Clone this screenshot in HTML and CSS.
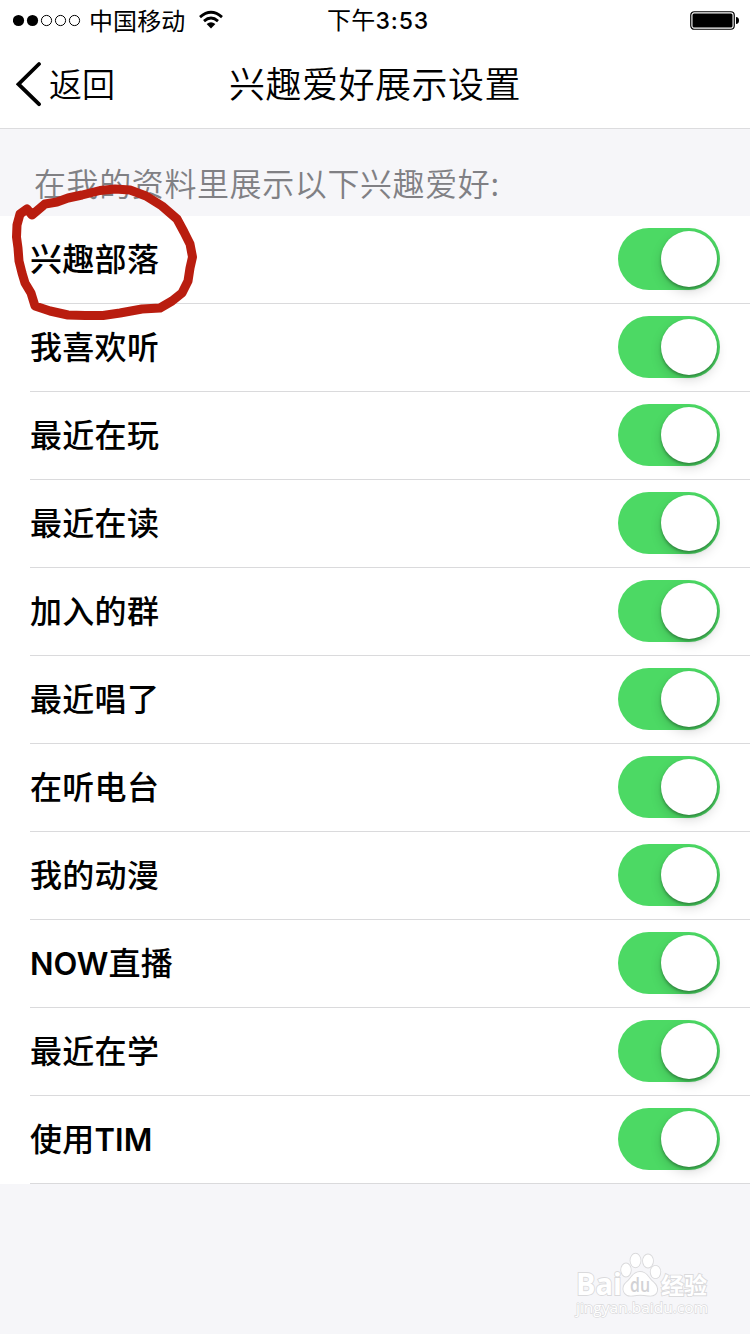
FILE: index.html
```html
<!DOCTYPE html>
<html lang="zh-CN">
<head>
<meta charset="utf-8">
<title>兴趣爱好展示设置</title>
<link rel="stylesheet" href="styles.css">
</head>
<body>
<div class="screen">
  <header class="top">
    <div class="status">
      <div class="status-left">
        <svg class="signal" width="68" height="14" viewBox="0 0 68 14">
          <circle cx="5.500" cy="6.500" r="5.6"/><circle cx="19.500" cy="6.500" r="5.6"/>
          <g fill="none" stroke="#000"><circle cx="33.500" cy="6.500" r="5.1"/><circle cx="47.500" cy="6.500" r="5.1"/><circle cx="61.500" cy="6.500" r="5.1"/></g>
        </svg>
        <span class="carrier">中国移动</span>
        <svg class="wifi" width="26" height="20" viewBox="0 0 26 20">
          <g fill="none" stroke="#000" stroke-width="2.8"><path d="M2 7.1Q13-2.5 24 7.1"/><path d="M6 11.1Q13 5 20 11.1"/></g>
          <path d="M8.6 14Q13 10.6 17.4 14L13 18.6Z"/>
        </svg>
      </div>
      <span class="time">下午<b>3:53</b></span>
      <svg class="battery" width="50" height="19" viewBox="0 0 50 19">
        <rect x=".75" y=".75" width="43.5" height="17.5" rx="3.5" fill="none" stroke="#000" stroke-width="1.2"/>
        <rect x="2.5" y="2.5" width="40" height="14" rx="1.5"/>
        <path d="M46 6Q49 6.4 49 9.5T46 13Z"/>
      </svg>
    </div>
    <nav class="nav">
      <a class="back"><svg width="26" height="46" viewBox="0 0 26 46"><path d="M23 3 2.5 23.2 23 43.2" fill="none" stroke="#000" stroke-width="3.8" stroke-linecap="round" stroke-linejoin="miter"/></svg><span>返回</span></a>
      <h1 class="title">兴趣爱好展示设置</h1>
    </nav>
  </header>
  <p class="caption">在我的资料里展示以下兴趣爱好:</p>
  <main class="list">
    <div class="row"><span>兴趣部落</span><i class="switch"></i></div>
    <div class="row"><span>我喜欢听</span><i class="switch"></i></div>
    <div class="row"><span>最近在玩</span><i class="switch"></i></div>
    <div class="row"><span>最近在读</span><i class="switch"></i></div>
    <div class="row"><span>加入的群</span><i class="switch"></i></div>
    <div class="row"><span>最近唱了</span><i class="switch"></i></div>
    <div class="row"><span>在听电台</span><i class="switch"></i></div>
    <div class="row"><span>我的动漫</span><i class="switch"></i></div>
    <div class="row"><span><b class="latin">NOW</b>直播</span><i class="switch"></i></div>
    <div class="row"><span>最近在学</span><i class="switch"></i></div>
    <div class="row"><span>使用<b class="latin">TIM</b></span><i class="switch"></i></div>
  </main>
  <svg class="marker" width="200" height="150" viewBox="0 180 200 150">
    <path d="M32 215L27 209L20 214L17 225L16.500 237L18 248L19 261L22 273L25 283L31 293L35 306L50 311L68 315L85 315.500L103 315.500L120 313L142 309L160 308L172 301L182 293L188 281L190 268L192.500 257L190 244L184 232L177 219L162 206L146 196L130 190L115 189L100 190.500L82 195L68 198L57 202L45 204Z" fill="none" stroke="#b91d0f" stroke-width="9" stroke-linecap="round" stroke-linejoin="round"/>
  </svg>
  <svg class="watermark" width="150" height="76" viewBox="570 1248 150 76">
    <g fill="#fff" stroke="#dadadc" stroke-width="1.8" paint-order="stroke">
      <text class="wm-brand" x="576" y="1295" textLength="46" lengthAdjust="spacingAndGlyphs">Bai</text>
      <ellipse cx="626" cy="1270" rx="4.8" ry="6.5"/><ellipse cx="635.5" cy="1260.5" rx="5" ry="6.8"/><ellipse cx="648" cy="1261" rx="5" ry="6.5"/><ellipse cx="655.5" cy="1272" rx="4.8" ry="6.2"/>
      <path d="M640 1272C633 1272 631 1279 627 1282C620 1288 624 1297 633 1295.500Q640 1294 648 1295.500C658 1297 660 1288 653 1282C648 1278 647 1272 640 1272Z"/>
      <text class="wm-cn" x="661" y="1294" textLength="46" lengthAdjust="spacingAndGlyphs">经验</text>
      <text class="wm-url" x="576" y="1313" textLength="132" lengthAdjust="spacingAndGlyphs">jingyan.baidu.com</text>
    </g>
    <text class="wm-du" x="630" y="1292" textLength="20" lengthAdjust="spacingAndGlyphs">du</text>
  </svg>
</div>
</body>
</html>
```
FILE: styles.css
```css
* { box-sizing: border-box; }
body { margin: 0; background: #f6f6f9; font-family: "Noto Sans CJK SC", sans-serif; color: #000; }
.screen { position: relative; width: 750px; height: 1334px; overflow: hidden; background: #f6f6f9; }
.top { height: 129px; background: #fff; border-bottom: 1px solid #dcdcde; }
.status { height: 40px; padding: 0 10px 0 13px; display: grid; grid-template-columns: 1fr auto 1fr; align-items: center; }
.status-left { display: flex; align-items: center; }
.carrier { margin: 0 13px 0 8px; padding-bottom: 3px; font-size: 24px; line-height: 37px; letter-spacing: .1px; font-weight: 400; }
.wifi { margin-top: -1px; }
.time { padding: 0 0 1px 3px; font-size: 24px; line-height: 38px; letter-spacing: .3px; }
.time b { font: 500 23px/38px Inter, sans-serif; letter-spacing: .9px; }
.battery { justify-self: end; margin-top: -1px; }
.nav { height: 88px; padding: 0 16px; display: grid; grid-template-columns: 1fr auto 1fr; align-items: center; }
.back { display: flex; align-items: center; gap: 7px; font-size: 33px; line-height: 86px; font-weight: 350; }
.back span { padding-bottom: 2px; }
.title { margin: 0; padding-bottom: 3px; font-size: 36px; line-height: 85px; font-weight: 350; letter-spacing: .5px; }
.caption { margin: 0; height: 87px; padding: 30px 0 0 34px; font-size: 32px; line-height: 46px; font-weight: 350; letter-spacing: .6px; color: #808084; }
.list { background: #fff; padding-left: 30px; }
.row { height: 88px; padding: 0 30px 1px 0; border-bottom: 1px solid #dadadc; display: flex; align-items: center; justify-content: space-between; font-size: 32px; font-weight: 500; letter-spacing: .3px; }
.row span { padding-bottom: 5px; }
.latin { font: 600 31px/1 Inter, sans-serif; letter-spacing: 0; }
.switch { width: 102px; height: 62px; padding: 3px; border-radius: 31px; background: #4cd964; display: flex; justify-content: flex-end; }
.switch::after { content: ""; width: 56px; height: 56px; border-radius: 50%; background: #fff; box-shadow: 0 5px 12px rgba(0,0,0,.15), 0 2px 3px rgba(0,0,0,.3); }
.marker { position: absolute; left: 0; top: 180px; }
.watermark { position: absolute; left: 570px; top: 1248px; }
.wm-brand { font: 700 31px "Open Sans", sans-serif; }
.wm-cn { font: 700 23px "Noto Sans CJK SC", sans-serif; }
.wm-url { font: 400 15px "Open Sans", sans-serif; stroke-width: 1.3px; }
.wm-du { font: 600 19px "Open Sans", sans-serif; fill: #d2d2d5; }
```
